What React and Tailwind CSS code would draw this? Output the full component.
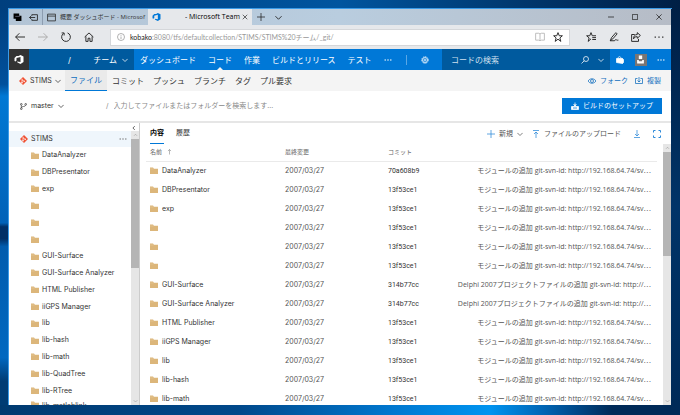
import React, { useState } from "react";

const folders = [
  "DataAnalyzer", "DBPresentator", "exp", "", "", "",
  "GUI-Surface", "GUI-Surface Analyzer", "HTML Publisher", "iiGPS Manager",
  "lib", "lib-hash", "lib-math", "lib-QuadTree", "lib-RTree", "lib-matlablink",
];

const MODULE_MSG = "モジュールの追加 git-svn-id: http://192.168.64.74/sv";
const DELPHI_MSG = "Delphi 2007プロジェクトファイルの追加 git-svn-id: http://";

const files = folders.slice(0, 13).map((name, i) => ({
  name,
  date: "2007/03/27",
  commit: i === 0 ? "70a608b9" : i === 6 || i === 7 ? "314b77cc" : "13f53ce1",
  message: i === 6 || i === 7 ? DELPHI_MSG : MODULE_MSG,
}));

const Svg = ({ className = "size-2", box = "0 0 16 16", width = 1.5, children }) => (
  <svg viewBox={box} className={"shrink-0 " + className} fill="none" stroke="currentColor" strokeWidth={width} aria-hidden="true">
    {children}
  </svg>
);

const Chevron = ({ className = "size-2" }) => (
  <Svg className={className} width={2}><path d="M1 5l7 7 7-7" /></Svg>
);

const Dots = () => (
  <Svg className="size-2"><path d="M1 7h3v2H1zM6.5 7h3v2h-3zM12 7h3v2h-3z" fill="currentColor" stroke="none" /></Svg>
);

const FolderIcon = () => (
  <svg viewBox="0 0 16 14" className="w-2 h-[7px] shrink-0" aria-hidden="true">
    <path d="M0 1h6l2 2.5h8V14H0z" fill="#dcb67a" />
    <path d="M0 4h6l2-1" fill="none" stroke="#e9cfa4" />
  </svg>
);

const GitIcon = () => (
  <svg viewBox="0 0 16 16" className="size-2 shrink-0" aria-hidden="true">
    <path d="M8 0l8 8-8 8-8-8z" fill="#f05133" />
    <path d="M6 3.5v8.5M6 5.5l4.5 3.5" stroke="#fff" strokeWidth="1.4" fill="none" />
    <circle cx="6" cy="11.5" r="1.3" fill="#fff" />
    <circle cx="10.5" cy="8.5" r="1.3" fill="#fff" />
  </svg>
);

const VstsLogo = ({ className }) => (
  <svg viewBox="0 0 20 18" className={"shrink-0 " + className} fill="currentColor" aria-hidden="true">
    <path fillRule="evenodd" d="M1 6l4-4h4l4-2 6 3v11l-6 4-6-3-1-2 7 1V4L5 6v5l-2 2-2-1z" />
  </svg>
);

const TitleBar = () => (
  <div className="flex h-4 shrink-0 bg-linear-to-r from-[#b3c4d5] via-[#b9cddf] to-[#b6bcc6] text-[#222]">
    <div className="flex w-[33px] items-center justify-between px-1 shrink-0">
      <Svg className="size-[9px] text-black"><path d="M1 1h10v4h4v9H5v-4H1z" fill="currentColor" stroke="none" /><path d="M4 6h8" stroke="#667" /></Svg>
      <Svg className="size-[9px]"><path d="M5 5V3h10v10H5v-2M11 8H1m3-3L1 8l3 3" /></Svg>
    </div>
    <div className="flex w-[106px] items-center gap-1 border-l border-[#8d9db0] pl-1 shrink-0 overflow-hidden text-[6px] text-[#333]">
      <Svg className="size-[9px]"><path d="M1 2h14v12H1zM1 5.500h14" /></Svg>
      <span className="whitespace-nowrap">概要 ダッシュボード - Microsof</span>
    </div>
    <div className="flex w-[104px] items-center bg-[#e6e8eb] pl-1 pr-1 shrink-0 text-black">
      <VstsLogo className="h-2 w-[9px] text-[#0078d7]" />
      <span className="ml-6 flex-1 overflow-hidden whitespace-nowrap">- Microsoft Team</span>
      <button aria-label="閉じる" className="shrink-0"><Svg className="size-[6px]"><path d="M2 2l12 12M14 2L2 14" /></Svg></button>
    </div>
    <div className="flex items-center gap-[10px] pl-[5px]">
      <button aria-label="新しいタブ"><Svg><path d="M8 0v16M0 8h16" /></Svg></button>
      <button aria-label="タブの一覧"><Chevron className="size-[7px]" /></button>
    </div>
    <div className="ml-auto flex items-center gap-[18px] pr-[9px]">
      <button aria-label="最小化"><Svg className="size-[6px]" width={2}><path d="M0 8h16" /></Svg></button>
      <button aria-label="最大化"><Svg className="size-[6px]" width={2}><path d="M1 1h14v14H1z" /></Svg></button>
      <button aria-label="ウィンドウを閉じる"><Svg className="size-[6px]" width={2}><path d="M1 1l14 14M15 1L1 15" /></Svg></button>
    </div>
  </div>
);

const AddressBar = () => (
  <div className="flex h-6 shrink-0 items-center bg-[#e6e8eb] text-[#222]">
    <div className="flex w-[101px] shrink-0 items-center justify-between pl-[6px] pr-4">
      <button aria-label="戻る"><Svg className="size-[10px]"><path d="M16 8H1m6-6L1 8l6 6" /></Svg></button>
      <button aria-label="進む" className="text-[#aaa]"><Svg className="size-[10px]"><path d="M0 8h15M9 2l6 6-6 6" /></Svg></button>
      <button aria-label="更新"><Svg className="size-[10px]"><path d="M10.500 1.500A7 7 0 1 1 4 2.300M1 1.500h4v4" /></Svg></button>
      <button aria-label="ホーム"><Svg className="size-[10px]"><path d="M1 8l7-6.500L15 8M3 7v8h3.500v-5h3v5H13V7" /></Svg></button>
    </div>
    <div className="flex h-[17px] flex-1 items-center border border-[#d5d7da] bg-white px-[6px]">
      <Svg className="size-2 text-[#888]" width={1.3}><circle cx="8" cy="8" r="7" /><path d="M8 7v5M8 4v1.500" /></Svg>
      <span className="ml-[5px] whitespace-nowrap font-['Lato','Noto_Sans_CJK_JP',sans-serif] text-[#999]"><span className="text-[#222]">kobako</span>:8080/tfs/defaultcollection/STIMS/STIMS%20チーム/_git/</span>
      <div className="ml-auto flex items-center gap-2">
        <Svg className="size-[10px] text-[#bbb]"><path d="M8 3v11M1 2h5l2 1 2-1h5v11h-5l-2 1-2-1H1z" /></Svg>
        <button aria-label="お気に入り"><Svg className="size-[10px]"><path d="M8 1l2 5h5l-4 3.500 1.500 5.500L8 11.500 3.500 15 5 9.500 1 6h5z" /></Svg></button>
      </div>
    </div>
    <div className="flex w-[101px] shrink-0 items-center justify-between pl-4 pr-[7px]">
      <button aria-label="ハブ"><Svg className="size-[10px]"><path d="M8 11l-4.500 4L5 9.500 1 6h5l2-5 2 5h6M10 9h6M10 12h6" /></Svg></button>
      <button aria-label="メモ"><Svg className="size-[10px]"><path d="M2 14L4 9l7-8 2 2-7 8-4 3h7c2-4 3 0 6-1" /></Svg></button>
      <button aria-label="共有"><Svg className="size-[10px]"><path d="M6 4H1v11h11v-4M10 1l5 4.500-5 4.500V7.500C7 7 5 9 4 11c0-4 2-7 6-7z" /></Svg></button>
      <button aria-label="設定"><Svg className="size-[10px]"><path d="M1 7h2v2H1zM7 7h2v2H7zM13 7h2v2h-2z" fill="currentColor" stroke="none" /></Svg></button>
    </div>
  </div>
);

const navItems = ["ダッシュボード", "コード", "作業", "ビルドとリリース", "テスト"];

const MainNav = () => (
  <nav className="flex h-[21px] shrink-0 items-center bg-[#0078d7] text-[8px] text-white">
    <a href="#" aria-label="ホーム" className="flex h-full w-5 shrink-0 items-center justify-center bg-[#333]">
      <VstsLogo className="h-[9px] w-[10px]" />
    </a>
    <div className="flex h-full w-[105px] shrink-0 items-center bg-[#005a9e] pr-[6px]">
      <span className="ml-[39px]">/</span>
      <button className="ml-auto flex items-center gap-[5px]">チーム <Chevron className="size-[6px]" /></button>
    </div>
    <div className="flex h-full shrink-0 items-center gap-3 pl-[6px]">
      {navItems.map((item) => (
        <a key={item} href="#" className="relative flex h-full items-center whitespace-nowrap">
          {item}
          {item === "コード" && (
            <span className="absolute bottom-0 left-1/2 -translate-x-1/2 border-x-[3px] border-b-[3px] border-x-transparent border-b-[#f4f4f4]" />
          )}
        </a>
      ))}
      <button aria-label="その他"><Dots /></button>
    </div>
    <span className="ml-[14px] h-[10px] w-px bg-[#5aa7e6]" />
    <button aria-label="設定" className="ml-[14px]">
      <Svg><circle cx="8" cy="8" r="6.500" strokeDasharray="3 1.200" /><circle cx="8" cy="8" r="5" /><circle cx="8" cy="8" r="2" /></Svg>
    </button>
    <div className="ml-auto flex h-full w-[168px] shrink-0 items-center bg-[#005a9e] pl-[9px] pr-[6px]">
      <input aria-label="コードの検索" placeholder="コードの検索" className="w-0 flex-1 bg-transparent text-[8px] placeholder:text-[#cfe0ef]" />
      <Svg className="size-2"><circle cx="10" cy="6" r="5" /><path d="M6.500 9.500L1 15" /></Svg>
      <Chevron className="ml-[9px] size-[6px]" />
    </div>
    <div className="flex w-[61px] shrink-0 items-center justify-between px-[6px]">
      <Svg><path d="M1 5h12v10L1 13zM13 5l2 2v6l-2 2" fill="currentColor" /><path d="M4 5c0-5 6-5 6 0" /></Svg>
      <span className="flex size-3 items-center justify-center bg-[#7a7574]">
        <Svg className="size-[9px]"><path d="M2 9h3v2h6V9h3v6H2zM5 1h6v6H5z" fill="currentColor" stroke="none" /></Svg>
      </span>
      <button aria-label="その他"><Dots /></button>
    </div>
  </nav>
);

const HubNav = () => (
  <div className="flex h-[21px] shrink-0 items-center bg-[#f4f4f4] text-[8px] text-[#333]">
    <button className="flex w-14 shrink-0 items-center gap-[3px] pl-[10px]">
      <GitIcon /><span className="text-[7px]">STIMS</span><Chevron className="size-[6px]" />
    </button>
    <a href="#" className="flex h-full items-center border-b border-[#0078d7] bg-[#eaeaea] px-[5px] text-[#106ebe]">ファイル</a>
    <div className="flex items-center gap-[9px] pl-[5px]">
      {["コミット", "プッシュ", "ブランチ", "タグ", "プル要求"].map((t) => <a key={t} href="#">{t}</a>)}
    </div>
    <div className="ml-auto flex items-center gap-[7px] pr-[10px] text-[7px] text-[#106ebe]">
      <button className="flex items-center gap-1">
        <Svg><path d="M0 8c4-6 12-6 16 0-4 6-12 6-16 0z" /><circle cx="8" cy="8" r="3" /></Svg>フォーク
      </button>
      <button className="flex items-center gap-1">
        <Svg><path d="M5 3H1v10h14V3h-4M8 0v10M5 7l3 3 3-3" /></Svg>複製
      </button>
    </div>
  </div>
);

const BranchBar = () => (
  <div className="flex h-8 shrink-0 items-center border-b-2 border-[#e6e6e6] pl-[11px] pr-[9px] text-[#333]">
    <button className="flex w-[86px] shrink-0 items-center gap-1">
      <Svg className="size-[7px]"><circle cx="3" cy="3" r="2" /><circle cx="13" cy="3" r="2" /><circle cx="3" cy="13" r="2" /><path d="M3 5v6M13 5c0 4-10 2-10 6" /></Svg>
      master
      <Chevron className="size-[6px]" />
    </button>
    <span className="text-[#888]">/</span>
    <input aria-label="検索" placeholder="入力してファイルまたはフォルダーを検索します..." className="ml-[5px] w-0 flex-1 bg-transparent placeholder:text-[#888]" />
    <button className="flex h-4 items-center gap-1 bg-[#0078d7] px-[9px] text-white">
      <Svg><path d="M1 9h14v6H1zM8 1v6M5 5l3 3 3-3" fill="currentColor" /><path d="M4 12h8" stroke="#0078d7" /></Svg>
      ビルドのセットアップ
    </button>
  </div>
);

const ScrollBar = ({ thumb }) => (
  <div className="flex h-full w-2 shrink-0 flex-col items-center bg-[#e6e6e6] text-[#888]">
    <Svg className="my-[2px] h-1 w-[5px]" width={2}><path d="M2 11l6-6 6 6" /></Svg>
    <div className={"w-full bg-[#b5b5b5] " + thumb} />
    <Chevron className="mt-auto mb-[2px] h-1 w-[5px]" />
  </div>
);

const Tree = () => (
  <aside className="flex w-[131px] shrink-0 flex-col border-r border-[#ccc]">
    <button aria-label="折りたたむ" className="flex h-2 shrink-0 justify-end pr-[2px] pt-[2px] text-[#333]">
      <Svg className="size-[6px]" width={2}><path d="M10 3L5 8l5 5" /></Svg>
    </button>
    <div className="flex min-h-0 flex-1">
      <div className="flex min-w-0 flex-1 flex-col">
        <div className="flex h-4 shrink-0 items-center gap-[3px] bg-[#eff6fc] pl-[11px] pr-1">
          <GitIcon />STIMS
          <button aria-label="その他" className="ml-auto text-[#777]"><Dots /></button>
        </div>
        <ul className="flex min-h-0 flex-1 flex-col pl-[22px]">
          {folders.map((name, i) => (
            <li key={i} className={i === folders.length - 1 ? "flex h-[6px] shrink-0 items-start gap-[3px] overflow-hidden pt-[2px]" : "flex min-h-0 flex-1 items-center gap-[3px]"}>
              <FolderIcon />{name}
            </li>
          ))}
        </ul>
      </div>
      <ScrollBar thumb="h-[47%]" />
    </div>
  </aside>
);

const FileTable = () => (
  <table className="w-full table-fixed border-collapse text-left">
    <thead>
      <tr className="h-[17px] border-b border-[#eaeaea] text-[6px] text-[#666]">
        <th className="w-[139px] pl-1 font-normal">
          <span className="flex items-center gap-[5px]">名前 <Svg className="h-2 w-[5px]"><path d="M8 16V0M3 5l5-5 5 5" /></Svg></span>
        </th>
        <th className="w-[103px] font-normal">最終変更</th>
        <th className="w-[40px] font-normal">コミット</th>
        <th />
      </tr>
    </thead>
    <tbody>
      {files.map((f, i) => (
        <tr key={i} className="h-[19px]">
          <td className="pl-1"><span className="flex items-center gap-1"><FolderIcon />{f.name}</span></td>
          <td className="text-[#555]">{f.date}</td>
          <td className="font-[Roboto]">{f.commit}</td>
          <td className="whitespace-nowrap pr-[6px] text-right font-['Open_Sans','Noto_Sans_CJK_JP',sans-serif] text-[#555]">{f.message}<span className="font-['Noto_Sans_CJK_JP']">…</span></td>
        </tr>
      ))}
    </tbody>
  </table>
);

const Content = () => {
  const [tab, setTab] = useState("内容");

  return (
    <main className="flex min-w-0 flex-1 flex-col">
      <div className="flex h-[21px] shrink-0 items-center gap-3 pl-[10px] pr-[10px]">
        {["内容", "履歴"].map((t) => (
          <button
            key={t}
            onClick={() => setTab(t)}
            className={tab === t ? "h-full border-b border-[#0078d7] text-[7px] font-bold text-black" : "h-full border-b border-transparent text-[7px]"}
          >
            {t}
          </button>
        ))}
        <div className="ml-auto flex items-center text-[#555]">
          <button className="flex items-center gap-1">
            <Svg className="size-2 text-[#2b88d8]"><path d="M8 0v16M0 8h16" /></Svg>新規<Chevron className="size-[6px]" />
          </button>
          <button className="ml-[9px] flex items-center gap-1">
            <Svg className="size-2 text-[#2b88d8]"><path d="M2 1h12M8 16V4M4 8l4-4 4 4" /></Svg>ファイルのアップロード
          </button>
          <button aria-label="ダウンロード" className="ml-3 text-[#2b88d8]"><Svg><path d="M2 15h12M8 0v12M4 8l4 4 4-4" /></Svg></button>
          <button aria-label="全画面" className="ml-3 text-[#2b88d8]"><Svg width={2}><path d="M1 5V1h4M11 1h4v4M15 11v4h-4M5 15H1v-4" /></Svg></button>
        </div>
      </div>
      <div className="flex min-h-0 flex-1">
        <div className="min-w-0 flex-1 overflow-hidden pl-[6px] pr-[6px]"><FileTable /></div>
        <ScrollBar thumb="h-2/5" />
      </div>
    </main>
  );
};

// desktop wallpaper shows as a thin frame round the browser window
export default function App() {
  return (
    <div className="flex h-screen flex-col font-['Inter','Noto_Sans_CJK_JP',sans-serif] text-[7px] leading-[10px] text-[#333]">
      <div className="h-[9px] shrink-0 bg-linear-to-r from-[#003f7e] via-[#00559f] to-[#001f45]" />
      <div className="flex min-h-0 flex-1">
        <div className="w-[9px] shrink-0 bg-[linear-gradient(to_bottom,#003f7e_0%,#00509c_19%,#0078d4_22%,#0062b8_54%,#002f66_55%,#002f66_58%,#005cae_60%,#0068c0_88%,#003c74_94%)]" />
        <div className="flex min-w-0 flex-1 flex-col overflow-hidden bg-white ring-1 ring-[#3a9be8]">
          <div className="font-['Open_Sans','Noto_Sans_CJK_JP',sans-serif]">
            <TitleBar />
            <AddressBar />
          </div>
          <MainNav />
          <HubNav />
          <BranchBar />
          <div className="flex min-h-0 flex-1">
            <Tree />
            <Content />
          </div>
        </div>
        <div className="w-[9px] shrink-0 bg-linear-to-b from-[#001f45] via-[#003468] to-[#002a58]" />
      </div>
      <div className="h-[10px] shrink-0 bg-[linear-gradient(to_right,#003a70_0%,#00488a_35%,#0078d0_58%,#0094f0_72%,#0064b4_80%,#002a58_90%)]" />
    </div>
  );
}
